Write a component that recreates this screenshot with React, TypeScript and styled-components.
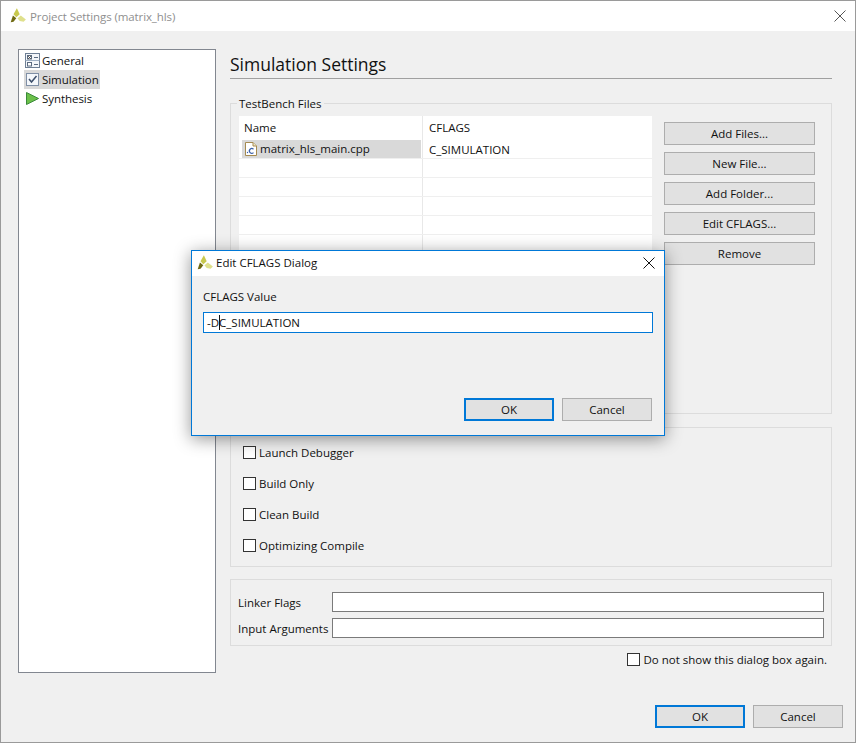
import React from "react";
import styled, { createGlobalStyle } from "styled-components";

const Global = createGlobalStyle`
  html, body { margin: 0; padding: 0; background: #9c9c9c; }
  body { font-family: "Open Sans", "Noto Sans", sans-serif; font-size: 11.5px; color: #111; }
  * { box-sizing: border-box; }
`;

const Win = styled.div`
  position: relative;
  width: 856px;
  height: 743px;
  background: #f0f0f0;
  border: 1px solid #9a9a9a;
  overflow: hidden;
  display: flex;
  flex-direction: column;
`;

const TitleBar = styled.div<{ $active?: boolean }>`
  height: ${(p) => (p.$active ? 25 : 30)}px;
  flex: none;
  background: #fff;
  display: flex;
  align-items: center;
  color: ${(p) => (p.$active ? "#111" : "#8f8f8f")};
  letter-spacing: ${(p) => (p.$active ? "0" : "-0.1px")};
  padding: ${(p) => (p.$active ? "0 9px 2px 4px" : "0 9px 0 8px")};
  gap: ${(p) => (p.$active ? 2 : 3)}px;
`;

const TitleText = styled.div`
  flex: 1;
  white-space: nowrap;
`;

const Content = styled.div`
  flex: 1;
  display: flex;
  flex-direction: column;
  padding: 18px 11px 0 17px;
  min-height: 0;
`;

const Split = styled.div`
  display: flex;
  gap: 14px;
  align-items: flex-start;
`;

const Tree = styled.div`
  width: 198px;
  height: 624px;
  flex: none;
  background: #fff;
  border: 1px solid #828790;
  padding: 1px 5px;
  display: flex;
  flex-direction: column;
`;

const TreeItem = styled.div<{ $selected?: boolean }>`
  width: 76px;
  height: 19px;
  display: flex;
  align-items: center;
  gap: 2px;
  padding-left: 1px;
  white-space: nowrap;
  letter-spacing: -0.05px;
  background: ${(p) => (p.$selected ? "#d9d9d9" : "transparent")};
`;

const Main = styled.div`
  width: 602px;
  flex: none;
  display: flex;
  flex-direction: column;
`;

const Heading = styled.div`
  font-size: 17.5px;
  line-height: 23px;
  height: 30px;
  padding-top: 4px;
  border-bottom: 1px solid #a0a0a0;
  color: #111;
  margin-bottom: 24px;
`;

const Group = styled.div`
  position: relative;
  width: 602px;
  height: 311px;
  border: 1px solid #dcdcdc;
  display: flex;
  gap: 12px;
  padding: 12px 16px 0 8px;
  margin-bottom: 13px;
`;

const GroupLabel = styled.div`
  position: absolute;
  left: 6px;
  top: -8px;
  padding: 0 2px;
  background: #f0f0f0;
  line-height: 15px;
`;

const Table = styled.div`
  width: 413px;
  height: 290px;
  flex: none;
  background: #fff;
  display: flex;
  flex-direction: column;
`;

const HeadRow = styled.div`
  height: 24px;
  flex: none;
  display: grid;
  grid-template-columns: 184px 1fr;
  line-height: 24px;
`;

const HeadCell = styled.div<{ $first?: boolean }>`
  padding-left: ${(p) => (p.$first ? 5 : 6)}px;
  border-right: ${(p) => (p.$first ? "1px solid #e8e8e8" : "none")};
`;

const Row = styled.div`
  height: 19px;
  flex: none;
  display: grid;
  grid-template-columns: 184px 1fr;
  line-height: 20px;
  border-bottom: 1px solid #efefef;
`;

const Cell = styled.div<{ $first?: boolean }>`
  padding-left: 6px;
  border-right: ${(p) => (p.$first ? "1px solid #e8e8e8" : "none")};
  height: 18px;
`;

const NameCell = styled.div`
  border-right: 1px solid #e8e8e8;
  height: 18px;
`;

const FileCell = styled.div`
  margin-left: 3px;
  height: 18px;
  width: 179px;
  background: #d9d9d9;
  display: flex;
  align-items: center;
  gap: 2px;
  padding-left: 2px;
`;

const Side = styled.div`
  width: 151px;
  display: flex;
  flex-direction: column;
  gap: 7px;
  padding-top: 6px;
`;

const Btn = styled.div<{ $w?: number; $default?: boolean }>`
  width: ${(p) => p.$w ?? 151}px;
  height: 23px;
  background: #e1e1e1;
  border: ${(p) => (p.$default ? "2px solid #0078d7" : "1px solid #adadad")};
  display: flex;
  align-items: center;
  justify-content: center;
  color: #111;
`;

const ChecksGroup = styled.div`
  width: 602px;
  height: 140px;
  border: 1px solid #dcdcdc;
  padding: 16px 0 0 12px;
  display: flex;
  flex-direction: column;
  gap: 15px;
  margin-bottom: 12px;
`;

const CheckRow = styled.div`
  display: flex;
  align-items: center;
  gap: 3px;
  height: 16px;
`;

const Box = styled.div`
  width: 13px;
  height: 13px;
  flex: none;
  background: #fff;
  border: 1px solid #333;
`;

const FlagsGroup = styled.div`
  width: 602px;
  height: 67px;
  border: 1px solid #dcdcdc;
  padding: 12px 7px 0 7px;
  display: flex;
  flex-direction: column;
  gap: 6px;
`;

const FlagRow = styled.div`
  display: flex;
  align-items: center;
  height: 20px;
`;

const FlagLabel = styled.div`
  width: 94px;
  flex: none;
  white-space: nowrap;
`;

const Input = styled.div`
  flex: 1;
  height: 20px;
  background: #fff;
  border: 1px solid #7a7a7a;
`;

const DontShow = styled.div`
  display: flex;
  justify-content: flex-end;
  align-items: center;
  gap: 3px;
  padding: 5px 5px 0 0;
  height: 21px;
`;

const Footer = styled.div`
  margin-top: 32px;
  padding-right: 1px;
  display: flex;
  justify-content: flex-end;
  gap: 8px;
`;

const Dialog = styled.div`
  position: absolute;
  left: 190px;
  top: 249px;
  width: 474px;
  height: 186px;
  background: #f0f0f0;
  border: 1px solid #0078d7;
  box-shadow: 0 3px 16px rgba(0, 0, 0, 0.42);
  display: flex;
  flex-direction: column;
`;

const DialogBody = styled.div`
  flex: 1;
  padding: 13px 11px 0 11px;
  display: flex;
  flex-direction: column;
`;

const DialogLabel = styled.div`
  line-height: 16px;
  margin-bottom: 7px;
`;

const ValueInput = styled.div`
  height: 21px;
  background: #fff;
  border: 1px solid #0078d7;
  padding-left: 3px;
  line-height: 19px;
  position: relative;
  white-space: pre;
`;

const Caret = styled.span`
  display: inline-block;
  width: 1px;
  height: 15px;
  background: #111;
  vertical-align: -3px;
  margin: 0 -1px 0 0;
`;

const DialogFooter = styled.div`
  margin-top: auto;
  padding: 0 1px 14px 0;
  display: flex;
  justify-content: flex-end;
  gap: 8px;
`;

const Logo = () => (
  <svg width="18" height="18" viewBox="0 0 16 16">
    <path d="M7 1 L9.5 6.5 L6.5 9 L4 6.5 Z" fill="#c8c94e" />
    <path d="M1.5 13.5 L3.5 7.5 L6.5 10 L4 13 Z" fill="#6f6a12" />
    <path d="M7.5 10 L10.5 7.5 L15 11 L13 13 L9.5 12.5 Z" fill="#dfe08c" />
  </svg>
);

const CloseX = ({ color = "#555" }: { color?: string }) => (
  <svg width="12" height="12" viewBox="0 0 12 12">
    <path d="M0.5 0.5 L11.5 11.5 M11.5 0.5 L0.5 11.5" stroke={color} strokeWidth="1" fill="none" />
  </svg>
);

const GeneralIcon = () => (
  <svg width="15" height="16" viewBox="0 0 15 16">
    <rect x="0.5" y="0.5" width="14" height="14" fill="#f3f6fa" stroke="#6e7f95" />
    <line x1="0.5" y1="7.5" x2="14.5" y2="7.5" stroke="#9fb0c4" />
    <rect x="2.5" y="2.5" width="4" height="3.5" fill="#fff" stroke="#5b6b80" />
    <path d="M3 3 L6 6 M6 3 L3 6" stroke="#444" strokeWidth="0.8" />
    <rect x="2.5" y="9.5" width="4" height="3.5" fill="#fff" stroke="#5b6b80" />
    <line x1="9" y1="4.5" x2="13" y2="4.5" stroke="#5b6b80" />
    <line x1="9" y1="11.5" x2="13" y2="11.5" stroke="#5b6b80" />
  </svg>
);

const SimIcon = () => (
  <svg width="15" height="16" viewBox="0 0 15 16">
    <rect x="1.5" y="1.5" width="12" height="12" fill="#f4f7fb" stroke="#7f8fa6" />
    <path d="M4 7 L6.5 10 L11.5 4" stroke="#3d4f6b" strokeWidth="1.5" fill="none" />
  </svg>
);

const SynthIcon = () => (
  <svg width="15" height="16" viewBox="0 0 15 16">
    <path d="M1.5 1.5 L13.5 7.5 L1.5 13.5 Z" fill="#6cc04a" stroke="#3a8a3a" />
  </svg>
);

const CFileIcon = () => (
  <svg width="14" height="16" viewBox="0 0 14 16">
    <path d="M1.5 1.5 H9 L12.5 5 V14.5 H1.5 Z" fill="#fff" stroke="#a58a50" />
    <path d="M9 1.5 V5 H12.5" fill="#efe6c8" stroke="#a58a50" />
    <circle cx="3.5" cy="11.5" r="0.7" fill="#3a5fa8" />
    <path d="M9.5 8.2 A2.4 2.4 0 1 0 9.5 11.6" stroke="#3a5fa8" strokeWidth="1.2" fill="none" />
  </svg>
);

export default function App() {
  return (
    <Win>
      <Global />
      <TitleBar>
        <Logo />
        <TitleText>Project Settings (matrix_hls)</TitleText>
        <CloseX />
      </TitleBar>
      <Content>
        <Split>
          <Tree>
            <TreeItem><GeneralIcon />General</TreeItem>
            <TreeItem $selected><SimIcon />Simulation</TreeItem>
            <TreeItem><SynthIcon />Synthesis</TreeItem>
          </Tree>
          <Main>
            <Heading>Simulation Settings</Heading>
            <Group>
              <GroupLabel>TestBench Files</GroupLabel>
              <Table>
                <HeadRow>
                  <HeadCell $first>Name</HeadCell>
                  <HeadCell>CFLAGS</HeadCell>
                </HeadRow>
                <Row>
                  <NameCell>
                    <FileCell><CFileIcon />matrix_hls_main.cpp</FileCell>
                  </NameCell>
                  <Cell>C_SIMULATION</Cell>
                </Row>
                {Array.from({ length: 13 }).map((_, i) => (
                  <Row key={i}>
                    <Cell $first />
                    <Cell />
                  </Row>
                ))}
              </Table>
              <Side>
                <Btn>Add Files...</Btn>
                <Btn>New File...</Btn>
                <Btn>Add Folder...</Btn>
                <Btn>Edit CFLAGS...</Btn>
                <Btn>Remove</Btn>
              </Side>
            </Group>
            <ChecksGroup>
              <CheckRow><Box />Launch Debugger</CheckRow>
              <CheckRow><Box />Build Only</CheckRow>
              <CheckRow><Box />Clean Build</CheckRow>
              <CheckRow><Box />Optimizing Compile</CheckRow>
            </ChecksGroup>
            <FlagsGroup>
              <FlagRow><FlagLabel>Linker Flags</FlagLabel><Input /></FlagRow>
              <FlagRow><FlagLabel>Input Arguments</FlagLabel><Input /></FlagRow>
            </FlagsGroup>
            <DontShow><Box />Do not show this dialog box again.</DontShow>
          </Main>
        </Split>
        <Footer>
          <Btn $w={90} $default>OK</Btn>
          <Btn $w={90}>Cancel</Btn>
        </Footer>
      </Content>
      <Dialog>
        <TitleBar $active>
          <Logo />
          <TitleText>Edit CFLAGS Dialog</TitleText>
          <CloseX color="#111" />
        </TitleBar>
        <DialogBody>
          <DialogLabel>CFLAGS Value</DialogLabel>
          <ValueInput>-D<Caret />C_SIMULATION</ValueInput>
          <DialogFooter>
            <Btn $w={90} $default>OK</Btn>
            <Btn $w={90}>Cancel</Btn>
          </DialogFooter>
        </DialogBody>
      </Dialog>
    </Win>
  );
}
